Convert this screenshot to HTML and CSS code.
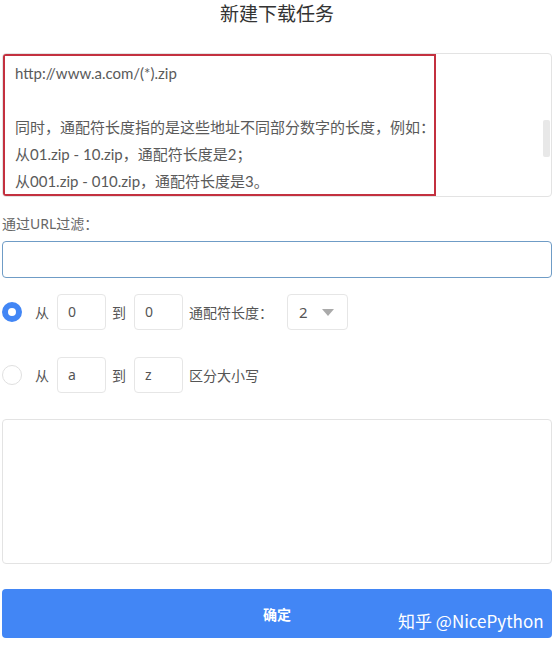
FILE: index.html
```html
<!doctype html>
<html>
  <head>
    <meta charset="UTF-8" />
    <meta name="viewport" content="width=device-width, initial-scale=1.0" />
    <title>新建下载任务</title>
    <link rel="stylesheet" href="styles.css">
  </head>
  <body>
    <h1 class="title">新建下载任务</h1>

    <div class="url-box">
      <div class="hint">
        <p>http://www.a.com/(*).zip</p>
        <p>&nbsp;</p>
        <p>同时，通配符长度指的是这些地址不同部分数字的长度，例如：</p>
        <p>从01.zip - 10.zip，通配符长度是2；</p>
        <p>从001.zip - 010.zip，通配符长度是3。</p>
      </div>
      <div class="scroll-thumb"></div>
    </div>

    <div class="section filter">
      <label class="label" for="filter">通过URL过滤：</label>
      <input type="text" id="filter" class="filter-input" />
    </div>

    <div class="range-row">
      <span class="radio checked"></span>
      <span class="word">从</span>
      <span class="small-input">0</span>
      <span class="word">到</span>
      <span class="small-input">0</span>
      <span class="word">通配符长度：</span>
      <span class="select">2 <span class="caret"></span></span>
    </div>

    <div class="range-row">
      <span class="radio"></span>
      <span class="word">从</span>
      <span class="small-input">a</span>
      <span class="word">到</span>
      <span class="small-input">z</span>
      <span class="word">区分大小写</span>
    </div>

    <div class="result-box"></div>

    <button class="btn-ok">确定</button>
    <span class="watermark">知乎 @NicePython</span>
  </body>
</html>
```

FILE: styles.css
```css
body {
  margin: 0;
  padding: 0 5px 0 2px;
  width: 550px;
  position: relative;
  font-family: "Noto Sans", "Noto Sans CJK SC", sans-serif;
  font-size: 14px;
  color: #555;
  background: #fff;
}

.title {
  margin: 0;
  height: 53px;
  line-height: 28px;
  font-size: 19px;
  font-weight: normal;
  text-align: center;
  color: #333;
}

.url-box {
  display: flex;
  align-items: flex-start;
  height: 142px;
  border: 1px solid #e3e3e3;
  border-radius: 4px;
  overflow: hidden;
}

.hint {
  box-sizing: border-box;
  width: 433px;
  height: 142px;
  padding: 4px 0 0 10px;
  border: 2px solid #c3303f;
  overflow: hidden;
  font-family: Lato, "Noto Sans CJK SC", sans-serif;
  font-size: 15px;
}

.hint p {
  margin: 0;
  line-height: 26.9px;
  color: #5a5a5a;
  white-space: nowrap;
}

.scroll-thumb {
  width: 7px;
  height: 37px;
  margin: 66px 1px 0 auto;
  background-color: #e8e8e8;
  border-radius: 2px;
}

.filter {
  margin-top: 16px;
}

.label {
  display: block;
  line-height: 22px;
  color: #666;
}

.filter-input {
  display: block;
  box-sizing: border-box;
  width: 100%;
  height: 37px;
  margin-top: 6px;
  border: 1px solid #6f9cc6;
  border-radius: 4px;
  outline: none;
}

.range-row {
  display: flex;
  align-items: center;
  height: 36px;
  margin-top: 16px;
}

.range-row + .range-row {
  margin-top: 27px;
}

.radio {
  box-sizing: border-box;
  width: 20px;
  height: 20px;
  margin: 0 13px 0 0;
  border: 1px solid #e0e0e0;
  border-radius: 50%;
}

.radio.checked {
  border: 6px solid #4286f5;
  background: #fff;
}

.word {
  color: #555;
}

.small-input {
  box-sizing: border-box;
  width: 49px;
  height: 36px;
  margin: 0 7px 0 8px;
  padding-left: 10px;
  line-height: 34px;
  border: 1px solid #e6e6e6;
  border-radius: 4px;
  color: #555;
}

.small-input + .word {
  margin-left: -1px;
}

.select {
  box-sizing: border-box;
  display: flex;
  align-items: center;
  width: 61px;
  height: 36px;
  margin-left: 14px;
  padding-left: 11px;
  border: 1px solid #e6e6e6;
  border-radius: 4px;
  color: #555;
  font-size: 15px;
}

.caret {
  width: 0;
  height: 0;
  margin-left: 14px;
  border-left: 6px solid transparent;
  border-right: 6px solid transparent;
  border-top: 7px solid #aaa;
}

.result-box {
  box-sizing: border-box;
  height: 145px;
  margin-top: 26px;
  border: 1px solid #e3e3e3;
  border-radius: 4px;
}

.btn-ok {
  display: block;
  width: 100%;
  height: 49px;
  margin-top: 25px;
  background-color: #4286f5;
  border: none;
  border-radius: 4px;
  color: #fff;
  font-family: "Noto Sans CJK SC", sans-serif;
  font-size: 14px;
  font-weight: bold;
}

.watermark {
  position: absolute;
  left: 398px;
  top: 608px;
  color: #fff;
  font-family: "Noto Sans CJK SC", sans-serif;
  font-size: 17px;
  line-height: 26px;
}
```
